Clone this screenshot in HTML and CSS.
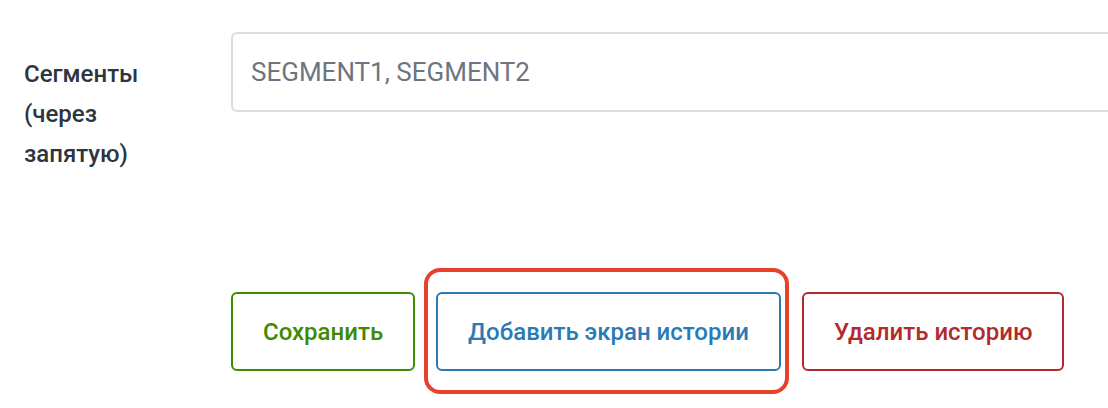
FILE: index.html
```html
<!DOCTYPE html>
<html lang="ru">
<head>
<meta charset="utf-8">
<link rel="stylesheet" href="styles.css">
</head>
<body>
<div class="form">
  <div class="row">
    <label class="label" for="seg">Сегменты (через запятую)</label>
    <input class="input" id="seg" type="text" placeholder="SEGMENT1, SEGMENT2">
  </div>
  <div class="actions">
    <button class="btn btn-green">Сохранить</button>
    <span class="highlight"><button class="btn btn-blue">Добавить экран истории</button></span>
    <button class="btn btn-red">Удалить историю</button>
  </div>
</div>
</body>
</html>
```
FILE: styles.css
```css
* { box-sizing: border-box; }
html, body { margin: 0; padding: 0; background: #fff; }
body { font-family: Roboto, "Liberation Sans", sans-serif; width: 1108px; height: 408px; overflow: hidden; }
.form { padding-top: 32px; }
.row { display: flex; align-items: flex-start; }
.label {
  width: 231px;
  padding-left: 24px;
  padding-right: 60px;
  padding-top: 22px;
  font-size: 24px;
  font-weight: 500;
  line-height: 40px;
  color: #2d3540;
}
.input {
  flex: 1;
  margin-right: -20px;
  height: 80px;
  border: 2px solid #d9dde3;
  border-radius: 6px;
  padding: 0 18px;
  font-family: Roboto, "Liberation Sans", sans-serif;
  font-size: 26px;
  color: #333;
  outline: none;
}
.input::placeholder { color: #6d7580; }
.actions {
  display: flex;
  gap: 21px;
  padding-left: 231px;
  margin-top: 118px;
}
.btn {
  height: 79px;
  padding: 0 30px;
  background: #fff;
  border: 2px solid;
  border-radius: 6px;
  font-family: Roboto, "Liberation Sans", sans-serif;
  font-size: 24px;
  font-weight: 500;
  cursor: pointer;
}
.btn-green { color: #3f8a00; border-color: #3f8a00; }
.btn-blue { color: #2a7ab5; border-color: #2a7ab5; }
.btn-red { color: #b2292e; border-color: #b2292e; }
.highlight { position: relative; display: inline-flex; }
.highlight::after {
  content: "";
  position: absolute;
  left: -12px; right: -8px; top: -24px; bottom: -23px;
  border: 4px solid #e8412a;
  border-radius: 16px;
  pointer-events: none;
}
```
